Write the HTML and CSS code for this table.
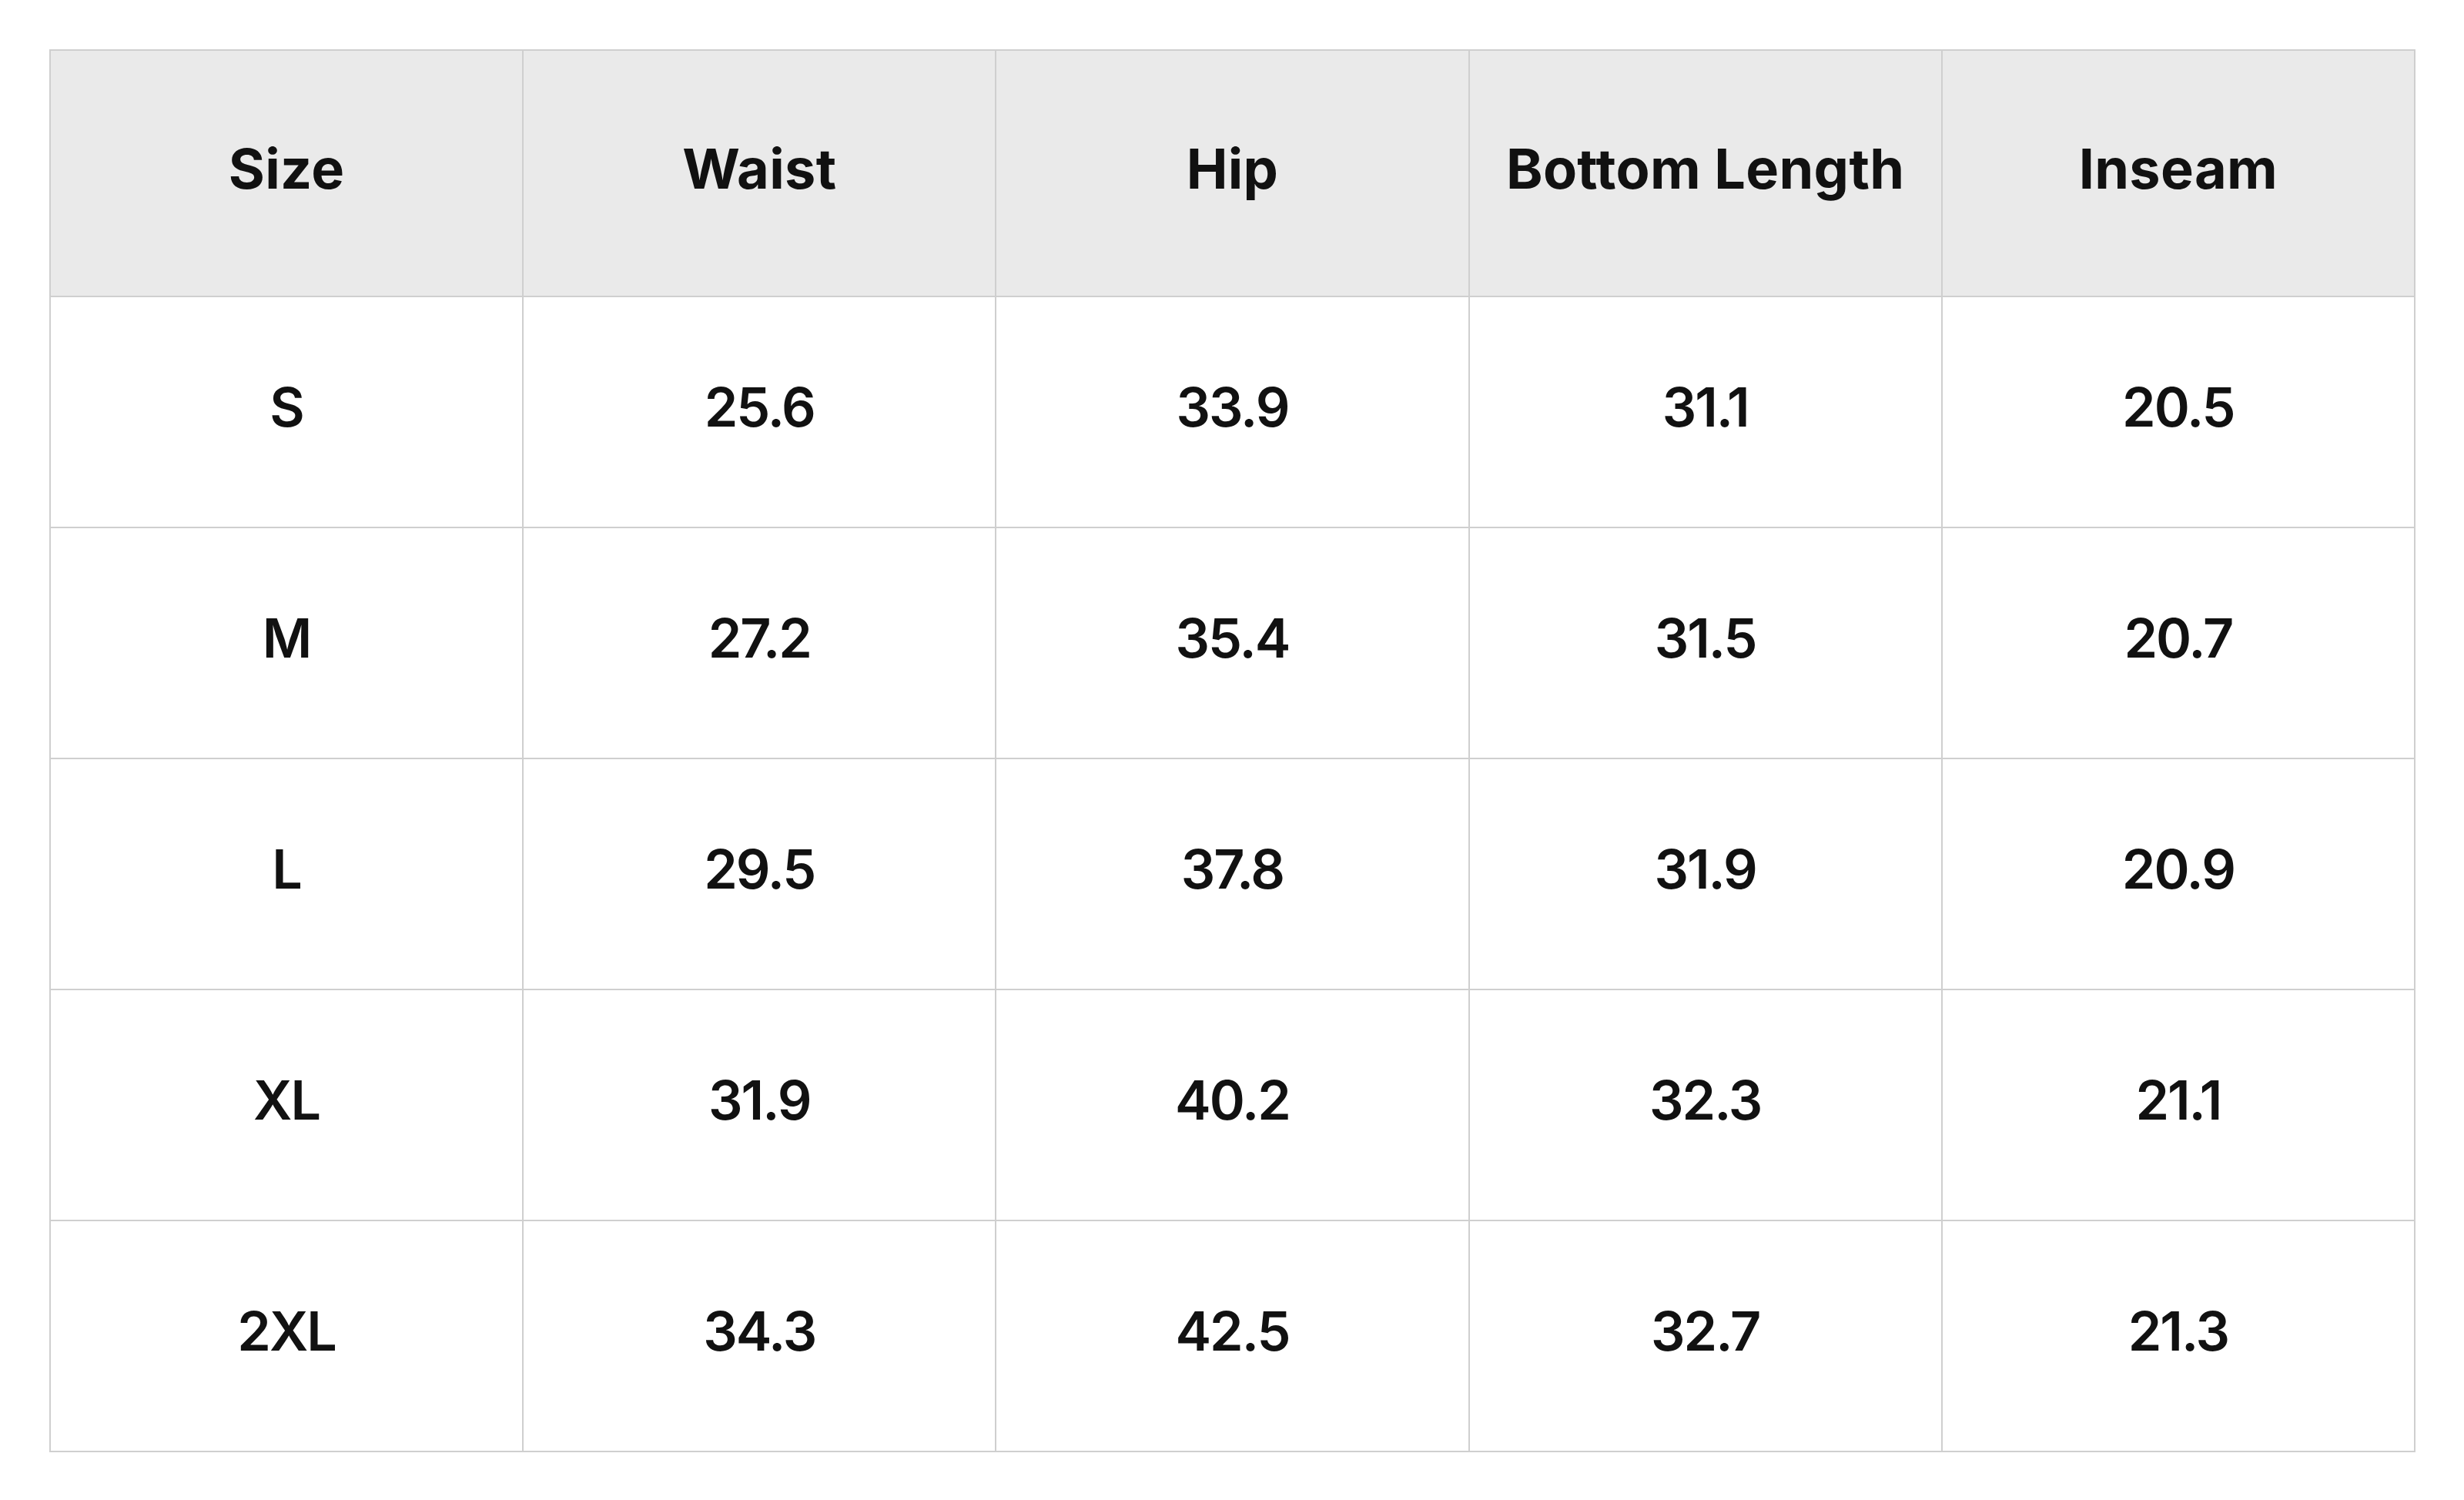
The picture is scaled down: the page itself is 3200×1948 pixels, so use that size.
FILE: index.html
```html
<!DOCTYPE html>
<html lang="en">
<head>
<meta charset="utf-8">
<title>Size Chart</title>
<link rel="stylesheet" href="styles.css">
</head>
<body>
<table class="size-table">
  <thead>
    <tr class="head-row">
      <th>Size</th><th>Waist</th><th>Hip</th><th>Bottom Length</th><th>Inseam</th>
    </tr>
  </thead>
  <tbody>
    <tr><td>S</td><td>25.6</td><td>33.9</td><td>31.1</td><td>20.5</td></tr>
    <tr><td>M</td><td>27.2</td><td>35.4</td><td>31.5</td><td>20.7</td></tr>
    <tr><td>L</td><td>29.5</td><td>37.8</td><td>31.9</td><td>20.9</td></tr>
    <tr><td>XL</td><td>31.9</td><td>40.2</td><td>32.3</td><td>21.1</td></tr>
    <tr><td>2XL</td><td>34.3</td><td>42.5</td><td>32.7</td><td>21.3</td></tr>
  </tbody>
</table>
</body>
</html>
```
FILE: styles.css
```css
html, body {
  margin: 0;
  padding: 0;
  background: #ffffff;
}
body {
  padding: 64px 63px 64px 64px;
  font-family: Inter, "Noto Sans", "Liberation Sans", sans-serif;
  color: #111111;
}
.size-table {
  width: 3073px;
  border-collapse: collapse;
  table-layout: fixed;
}
.size-table th,
.size-table td {
  border: 2px solid #cfcfcf;
  text-align: center;
  vertical-align: middle;
  padding: 0 0 14px 0;
  box-sizing: border-box;
}
.size-table th {
  height: 320px;
  background: #eaeaea;
  font-size: 72px;
  font-weight: 700;
  letter-spacing: 0.3px;
}
.size-table td {
  height: 300px;
  font-size: 70px;
  font-weight: 600;
  letter-spacing: -2px;
}
```
